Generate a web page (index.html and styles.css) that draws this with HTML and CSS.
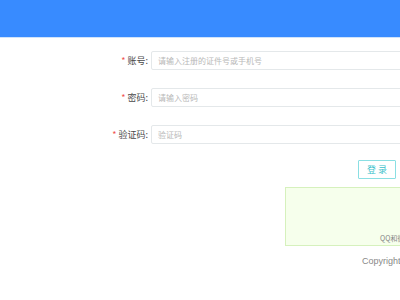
FILE: index.html
```html
<!DOCTYPE html>
<html>
<head>
<meta charset="utf-8">
<link rel="stylesheet" href="styles.css">
</head>
<body>
<div class="header"></div>
<div class="form">
  <div class="row">
    <label class="label"><span class="star">*</span> 账号:</label>
    <div class="input">请输入注册的证件号或手机号</div>
  </div>
  <div class="row">
    <label class="label"><span class="star">*</span> 密码:</label>
    <div class="input">请输入密码</div>
  </div>
  <div class="row">
    <label class="label"><span class="star">*</span> 验证码:</label>
    <div class="input">验证码</div>
  </div>
</div>
<div class="actions">
  <button class="btn">登 录</button>
</div>
<div class="notice">
  <span class="notice-text">QQ和微信</span>
</div>
<div class="copyright">Copyright</div>
</body>
</html>
```
FILE: styles.css
```css
html, body {
  margin: 0;
  padding: 0;
  width: 400px;
  height: 300px;
  overflow: hidden;
  background: #fff;
  font-family: "Noto Sans CJK SC", "Liberation Sans", sans-serif;
}
.header {
  height: 37px;
  background: #388bff;
  border-bottom: 1px solid #cfe3fb;
}
.form {
  display: flex;
  flex-direction: column;
  gap: 17px;
  padding-top: 12px;
  padding-left: 100px;
}
.row {
  display: flex;
  align-items: center;
  gap: 3px;
  height: 20px;
}
.label {
  width: 48px;
  flex: none;
  text-align: right;
  font-size: 9px;
  color: #4a4a4a;
  white-space: nowrap;
}
.star {
  color: #f0524f;
}
.input {
  flex: none;
  width: 300px;
  height: 19px;
  box-sizing: border-box;
  border: 1px solid #e4e8ea;
  border-radius: 2px;
  padding-left: 6px;
  font-size: 8px;
  line-height: 17px;
  color: #b8b8b8;
  white-space: nowrap;
  overflow: hidden;
}
.actions {
  padding-left: 358px;
  margin-top: 16px;
}
.btn {
  display: block;
  width: 38px;
  height: 19px;
  padding: 0;
  border: 1px solid #8adfe3;
  background: #fff;
  color: #3bbfcb;
  font-family: "Noto Sans CJK SC", sans-serif;
  font-size: 9px;
  border-radius: 1px;
}
.notice {
  margin-top: 8px;
  margin-left: 285px;
  width: 200px;
  height: 59px;
  box-sizing: border-box;
  background: #f6ffec;
  border: 1px solid #d6f1bd;
  position: relative;
}
.notice-text {
  position: absolute;
  left: 94px;
  bottom: 2px;
  font-size: 7px;
  color: #888;
  white-space: nowrap;
}
.copyright {
  margin-top: 10px;
  padding-left: 362px;
  font-family: "Liberation Sans", sans-serif;
  font-size: 9px;
  color: #888;
  white-space: nowrap;
}
```
